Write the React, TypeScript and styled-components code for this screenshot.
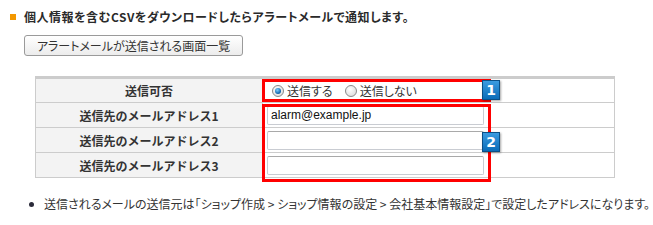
import React from "react";
import styled, { createGlobalStyle } from "styled-components";

const Global = createGlobalStyle`
  html, body { margin: 0; padding: 0; background: #fff; }
  body {
    font-family: "Noto Sans CJK JP", "Noto Sans", sans-serif;
    font-size: 12px;
    color: #333;
    font-feature-settings: "palt";
  }
`;

const Page = styled.div`
  width: 653px;
  height: 225px;
  padding-top: 9px;
  box-sizing: border-box;
  overflow: hidden;
`;

const Heading = styled.h2`
  display: flex;
  align-items: center;
  gap: 8px;
  margin: 0 0 0 10px;
  height: 16px;
  font-size: 12px;
  font-weight: bold;
  color: #2a2a2a;
  line-height: 16px;
  letter-spacing: 0.5px;
`;

const Square = styled.span`
  width: 6px;
  height: 6px;
  background: #f39800;
  flex: none;
`;

const Button = styled.button`
  display: block;
  margin: 10px 0 0 24px;
  width: 219px;
  height: 21px;
  padding: 0;
  border: 1px solid #9a9a9a;
  border-radius: 3px;
  background: linear-gradient(#ffffff, #ececec);
  font-family: inherit;
  font-size: 12px;
  color: #333;
  line-height: 19px;
  font-feature-settings: "palt";
`;

const TableArea = styled.div`
  position: relative;
  margin: 20px 0 0 35px;
  width: 580px;
`;

const Table = styled.table`
  width: 580px;
  border-collapse: collapse;
  border-top: 3px solid #cccccc;
  table-layout: fixed;
`;

const Row = styled.tr<{ $h: number }>`
  height: ${(p) => p.$h}px;
`;

const Label = styled.th`
  width: 226px;
  background: #f3f3f3;
  border: 1px solid #cccccc;
  border-top: none;
  font-size: 12px;
  font-weight: bold;
  color: #333;
  text-align: center;
  padding: 0;
  font-feature-settings: normal;
`;

const Value = styled.td`
  border: 1px solid #cccccc;
  border-top: none;
  padding: 0 0 0 4px;
  vertical-align: middle;
`;

const RadioGroup = styled.div`
  display: flex;
  align-items: center;
  gap: 12px;
  padding-left: 5px;
`;

const RadioLabel = styled.label`
  display: flex;
  align-items: center;
  gap: 3px;
  color: #333;
  font-size: 12px;
`;

const Radio = styled.input`
  appearance: none;
  margin: 0;
  width: 12px;
  height: 12px;
  border-radius: 50%;
  border: 1px solid #8a8a8a;
  background: radial-gradient(circle at 40% 35%, #ffffff, #d6d6d6);
  box-sizing: border-box;
  position: relative;
  &:checked::after {
    content: "";
    position: absolute;
    left: 2px;
    top: 2px;
    width: 6px;
    height: 6px;
    border-radius: 50%;
    background: radial-gradient(circle at 40% 35%, #7fd0ff, #0a5fa8 70%);
  }
`;

const TextInput = styled.input`
  display: block;
  width: 217px;
  height: 19px;
  margin: 0;
  box-sizing: border-box;
  border: 1px solid #c9ccd2;
  border-top-color: #a9a9a9;
  border-radius: 2px;
  padding: 0 3px;
  font-family: "Liberation Sans", Arial, sans-serif;
  font-size: 12px;
  color: #111;
  background: #fff;
`;

const Annotation = styled.div<{ $top: number; $height: number }>`
  position: absolute;
  left: 227px;
  top: ${(p) => p.$top}px;
  width: 229px;
  height: ${(p) => p.$height}px;
  border: 3px solid #ff0000;
  box-sizing: border-box;
  pointer-events: none;
`;

const Badge = styled.div<{ $top: number }>`
  position: absolute;
  left: 447px;
  top: ${(p) => p.$top}px;
  width: 18px;
  height: 20px;
  box-sizing: border-box;
  border: 1px solid #0b4f86;
  background: linear-gradient(#3b9be0, #0a6cb8);
  box-shadow: 1px 1px 2px rgba(0, 0, 0, 0.35);
  color: #fff;
  font-family: "DejaVu Sans", sans-serif;
  font-weight: bold;
  font-size: 14px;
  line-height: 18px;
  text-align: center;
`;

const Notes = styled.ul`
  list-style: none;
  margin: 18px 0 0 0;
  padding: 0 0 0 29px;
`;

const Note = styled.li`
  display: flex;
  align-items: center;
  gap: 10px;
  font-size: 12px;
  color: #333;
  line-height: 16px;
`;

const Dot = styled.span`
  width: 5px;
  height: 5px;
  border-radius: 50%;
  background: #2b2b3a;
  flex: none;
`;

export default function App() {
  return (
    <Page>
      <Global />
      <Heading>
        <Square />
        個人情報を含むCSVをダウンロードしたらアラートメールで通知します。
      </Heading>
      <Button type="button">アラートメールが送信される画面一覧</Button>
      <TableArea>
        <Table>
          <tbody>
            <Row $h={25}>
              <Label>送信可否</Label>
              <Value>
                <RadioGroup>
                  <RadioLabel>
                    <Radio type="radio" name="send" defaultChecked />
                    送信する
                  </RadioLabel>
                  <RadioLabel>
                    <Radio type="radio" name="send" />
                    送信しない
                  </RadioLabel>
                </RadioGroup>
              </Value>
            </Row>
            <Row $h={25}>
              <Label>送信先のメールアドレス1</Label>
              <Value>
                <TextInput defaultValue="alarm@example.jp" />
              </Value>
            </Row>
            <Row $h={25}>
              <Label>送信先のメールアドレス2</Label>
              <Value>
                <TextInput />
              </Value>
            </Row>
            <Row $h={25}>
              <Label>送信先のメールアドレス3</Label>
              <Value>
                <TextInput />
              </Value>
            </Row>
          </tbody>
        </Table>
        <Annotation $top={3} $height={23} />
        <Annotation $top={28} $height={78} />
        <Badge $top={4}>1</Badge>
        <Badge $top={56}>2</Badge>
      </TableArea>
      <Notes>
        <Note>
          <Dot />
          送信されるメールの送信元は「ショップ作成 &gt; ショップ情報の設定 &gt; 会社基本情報設定」で設定したアドレスになります。
        </Note>
      </Notes>
    </Page>
  );
}
